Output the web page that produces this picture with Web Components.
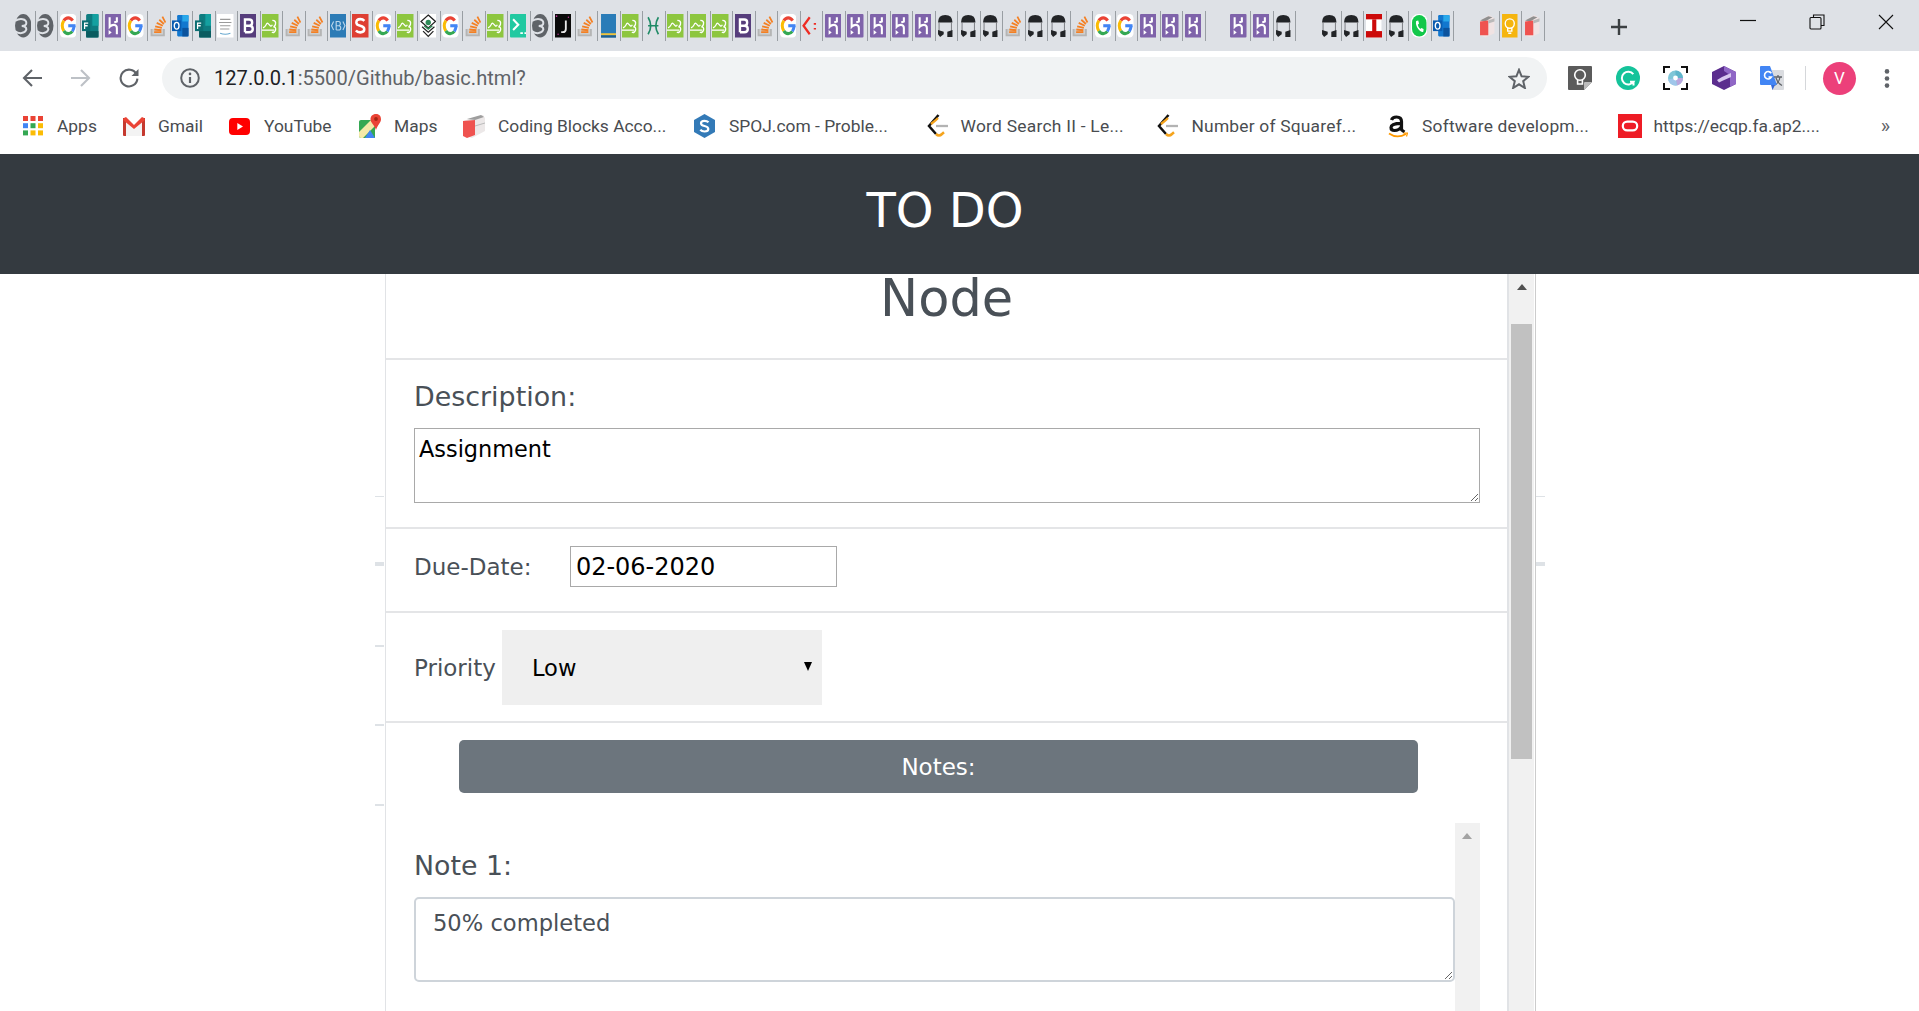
<!DOCTYPE html>
<html lang="en"><head><meta charset="utf-8"><title>TO DO</title>
<style>html,body{margin:0;padding:0;height:1011px;overflow:hidden;background:#fff}</style>
</head><body>
<todo-page></todo-page>
<script>
const gArc=(cx,cy,rx,ry,sw)=>{const a=(t1,t2,c)=>{const r=Math.PI/180,x1=cx+rx*Math.cos(t1*r),y1=cy+ry*Math.sin(t1*r),x2=cx+rx*Math.cos(t2*r),y2=cy+ry*Math.sin(t2*r);return `<path d="M${x1.toFixed(2)} ${y1.toFixed(2)}A${rx} ${ry} 0 0 1 ${x2.toFixed(2)} ${y2.toFixed(2)}" stroke="${c}" stroke-width="${sw}" fill="none"/>`};return a(-140,-40,'#ea4335')+a(140,220,'#fbbc05')+a(45,140,'#34a853')+a(0,45,'#4285f4')+`<path d="M${cx} ${cy}H${cx+rx+sw/2}" stroke="#4285f4" stroke-width="${sw}"/>`};
const T={
gh:`<ellipse cx="8" cy="11" rx="8" ry="11" fill="#5f6368"/><path d="M0 6.5C5 3.5 11 4.5 11 8.5C11 10.5 9 11.2 6.5 11.2C9 11.2 11 12.5 11 14.5C9.5 18.5 4 19 0 16" stroke="#dee1e6" stroke-width="1.9" fill="none"/>`,
g:`<rect width="16" height="22" rx="4" fill="#fff"/>`+gArc(8,11,5.6,7.4,2.9),
pl:`<rect x="4" width="12" height="22" rx="1.5" fill="#0e7c80"/><rect x="10" width="6" height="11" fill="#14a0a0"/><rect x="4" y="16" width="12" height="6" fill="#0a5c60"/><rect y="6" width="8" height="10" fill="#0d6e72"/><path d="M2.5 14V8.5H6M2.5 11H5.5" stroke="#fff" stroke-width="1.2" fill="none"/>`,
hk:`<rect width="16" height="22" rx="1" fill="#7f63aa"/><path d="M4.5 3V12C7 9.5 11.5 9.5 11.5 13V19" stroke="#fff" stroke-width="2" fill="none"/><path d="M11.5 3V7L9 8" stroke="#fff" stroke-width="2" fill="none"/><path d="M3.5 15L6.5 17.3L3.5 19.5Z" fill="#fff"/>`,
so:`<path d="M1.5 14V20H13.5V14" stroke="#b5b5b5" stroke-width="1.8" fill="#cfcfcf"/><path d="M4 17H11M4.2 14.5L11 15.2M5 11.5L11.5 13M6.5 8.3L12.4 11M9 5.4L13.5 9.4M12 2.5L15 8" stroke="#f48024" stroke-width="1.7" fill="none"/>`,
ol:`<rect x="5" y="1" width="11" height="20" rx="1" fill="#1277cf"/><rect x="10" y="1" width="6" height="6" fill="#29a8ea"/><rect x="10" y="13" width="6" height="8" fill="#0b539e"/><rect y="6" width="9" height="10" fill="#0a5cb0"/><ellipse cx="4.5" cy="11" rx="2.3" ry="3.2" stroke="#fff" stroke-width="1.3" fill="none"/>`,
wef:`<rect width="16" height="22" fill="#fff"/><path d="M3 5H13M2 8H14M3 11H13M3 14H12" stroke="#9a9a9a" stroke-width="1"/><path d="M3 18Q8 20 13 18" stroke="#69a9d0" stroke-width="1" fill="none"/>`,
bs:`<rect width="16" height="22" fill="#563d7c"/><path d="M4.8 17V5.2H9Q11.8 5.2 11.8 8Q11.8 11 9 11H4.8M9 11Q12.4 11 12.4 14Q12.4 17 9 17H4.8" stroke="#fff" stroke-width="2.3" fill="none"/>`,
gr:`<rect width="16" height="22" fill="#8dc63f"/><path d="M1 13Q3 12 4 10T6 9T8 11T10 10M0 15H12" stroke="#fff" stroke-width="1.2" fill="none"/><path d="M10 6Q14 6 13 10Q12 12 11 12Q14 12 13 15.5Q12 18 9.5 17" stroke="#fff" stroke-width="1.3" fill="none"/>`,
xb:`<rect width="16" height="22" fill="#2c7bb6"/><path d="M3.5 7L1.5 11L3.5 15M12.5 7L14.5 11L12.5 15" stroke="#b9d6ec" stroke-width="1.1" fill="none"/><path d="M6 15V7H8.5Q10 7 10 9T8.5 11H6M8.5 11Q10.4 11 10.4 13T8.5 15H6" stroke="#b9d6ec" stroke-width="1.1" fill="none"/>`,
rs:`<rect width="16" height="22" fill="#de3f33"/><path d="M12 6.5Q10.5 4.8 8 4.8Q4.2 4.8 4.2 8Q4.2 10.3 8 11Q11.9 11.8 11.9 14.3Q11.9 17.2 8 17.2Q5.2 17.2 3.8 15.4" stroke="#fff" stroke-width="2.4" fill="none"/>`,
hx:`<rect width="16" height="22" fill="#fff"/><path d="M8 1L15 7L8 13L1 7Z" stroke="#222" stroke-width="1.2" fill="none"/><path d="M2 12L8 17L14 12M3 16L8 21L13 16" stroke="#222" stroke-width="1.2" fill="none"/><circle cx="8" cy="8" r="2.6" fill="#2e8b57"/><path d="M4 11L8 14L12 11" stroke="#2e8b57" stroke-width="1.4" fill="none"/>`,
tm:`<rect width="16" height="22" rx="1" fill="#21c9a1"/><path d="M3 5L8 10L3 15" stroke="#fff" stroke-width="2" fill="none"/><path d="M10 18H12.5M14 18H16" stroke="#fff" stroke-width="1.6"/>`,
j:`<rect width="16" height="22" fill="#0a0a0a"/><path d="M10.5 6V14Q10.5 17 7.5 17H6" stroke="#e8e8e8" stroke-width="1.8" fill="none"/><circle cx="1.5" cy="2" r=".8" fill="#c2379a"/><circle cx="13" cy="3" r=".7" fill="#c2379a"/><circle cx="3" cy="19" r=".7" fill="#c2379a"/>`,
lb:`<rect x="1" width="15" height="22" fill="#2a7cb8"/><rect x="1" y="18" width="15" height="2" fill="#f0c33c"/><rect x="1" y="20" width="15" height="2" fill="#1f5f8f"/>`,
xg:`<path d="M3 3Q8 11 3 19M13 3Q8 11 13 19M3 11H13" stroke="#1f8a66" stroke-width="1.6" fill="none"/>`,
cd:`<path d="M7.5 3L1.5 11L7.5 19" stroke="#ee2c24" stroke-width="2.2" fill="none"/><path d="M12.5 8.5V10M12.5 13V14.5" stroke="#ee2c24" stroke-width="2.2"/>`,
mk:`<path d="M1 8Q1 1 8 1T15 8Z" fill="#222427"/><path d="M2 8V16M14 8V16" stroke="#6a6c70" stroke-width=".8"/><path d="M1 15L6.5 16.5V19L3 21.5L1 19ZM15 15L10 16.5V21.5H15Z" fill="#222427"/>`,
ri:`<rect x="0" y="1" width="15" height="21" fill="#fff"/><rect y="0" width="16" height="5" fill="#cc0a0a"/><rect x="6" y="5" width="4" height="12" fill="#cc0a0a"/><rect y="16" width="16" height="6" fill="#cc0a0a"/>`,
wa:`<rect width="16" height="22" rx="7" fill="#fff"/><rect x="1" y="1" width="14" height="20" rx="7" fill="#12c74a"/><path d="M5 6.5Q4 10 7 14T12 16.3L12.2 14L10 13L9 14Q7 12.5 6.6 10L7.8 9L7 6Z" fill="#fff"/>`,
bx:`<path d="M1 6L10 1L15 4V18L6 22L1 20Z" fill="#f0e3e3"/><path d="M1 6L9 2L13 3L6 7Z" fill="#8f8f8f"/><path d="M1 7L9 6V20L1 20Z" fill="#ef5350"/><path d="M9 9L15 7V4L9 6Z" fill="#b9b9b9"/>`,
kp:`<rect x="1" width="15" height="22" fill="#f5b50f"/><circle cx="8.5" cy="9" r="4.4" stroke="#fff" stroke-width="1.3" fill="none"/><path d="M6.5 13V16H10.5V13M7 18H10" stroke="#fff" stroke-width="1.3" fill="none"/>`
};
const I={
bulb:[24,24,`<path d="M1 0H23Q24 0 24 1V16L16 24H1Q0 24 0 23V1Q0 0 1 0Z" fill="#5b5b5b"/><path d="M24 16H17Q16 16 16 17V24Z" fill="#bdbdbd"/><circle cx="12" cy="9" r="5.3" stroke="#fff" stroke-width="1.6" fill="none"/><path d="M9.6 14V18H14.4V14" stroke="#fff" stroke-width="1.6" fill="none"/>`],
gram:[24,24,`<circle cx="12" cy="12" r="12" fill="#15c39a"/><path d="M17.3 8.2A6.4 6.4 0 1 0 17.5 15.8H14M17.5 15.8V19.5" stroke="#fff" stroke-width="2" fill="none"/>`],
lens:[25,24,`<path d="M1 7V1H7M18 1H24V7M24 17V23H18M7 23H1V17" stroke="#111" stroke-width="2" fill="none"/><circle cx="12.5" cy="12" r="7.5" fill="#7fc6d8"/><path d="M12.5 4.5A7.5 7.5 0 0 1 20 12L12.5 12Z" fill="#5fb5cb"/><path d="M12.5 12L20 12A7.5 7.5 0 0 1 14 19.4Z" fill="#b9a7dd"/><path d="M12.5 12L14 19.4A7.5 7.5 0 0 1 5.2 13.5Z" fill="#9fc6ea"/><circle cx="12.5" cy="12" r="2.4" fill="#fff"/>`],
hex:[24,24,`<path d="M12 0L24 6V18L12 24L0 18V6Z" fill="#5b2d8e"/><path d="M12 0L24 6V18L18 21V9L12 5Z" fill="#9067c6"/><path d="M5 14L10 11L19 7V11L10 15L7 16.5Z" fill="#d9c8f0"/>`],
tr:[24,24,`<path d="M12 4H23Q24 4 24 5V23Q24 24 23 24H12Z" fill="#dadce0"/><path d="M14 11H22M18 9V11M20 11Q19 17 14.5 19.5M16 12Q17.5 17 22 19.5" stroke="#5f6368" stroke-width="1.3" fill="none"/><path d="M1 0H10L17 19H1Q0 19 0 18V1Q0 0 1 0Z" fill="#4285f4"/><path d="M11 19L12.5 24L15 19Z" fill="#3367d6"/><path d="M11.3 7.2A3.7 3.7 0 1 0 11.5 11H8.5" stroke="#fff" stroke-width="1.6" fill="none"/>`],
star:[22,21,`<path d="M11 1.8L13.6 8.3L20.5 8.8L15.2 13.2L16.9 20L11 16.3L5.1 20L6.8 13.2L1.5 8.8L8.4 8.3Z" stroke="#5f6368" stroke-width="2" fill="none"/>`],
back:[20,18,`<path d="M20 9H2M10 1L2 9L10 17" stroke="#5f6368" stroke-width="2.1" fill="none"/>`],
fwd:[20,18,`<path d="M0 9H18M10 1L18 9L10 17" stroke="#bdc1c6" stroke-width="2.1" fill="none"/>`],
rel:[20,20,`<path d="M17.5 6.2A8.4 8.4 0 1 0 18.4 10.6" stroke="#5f6368" stroke-width="2.1" fill="none"/><path d="M19.5 1V8H12.5Z" fill="#5f6368"/>`],
info:[20,20,`<circle cx="10" cy="10" r="8.8" stroke="#5f6368" stroke-width="2" fill="none"/><path d="M10 9V15" stroke="#5f6368" stroke-width="2.2"/><circle cx="10" cy="5.9" r="1.3" fill="#5f6368"/>`],
dots:[6,19,`<circle cx="3" cy="2.4" r="2.3" fill="#5f6368"/><circle cx="3" cy="9.5" r="2.3" fill="#5f6368"/><circle cx="3" cy="16.6" r="2.3" fill="#5f6368"/>`],
apps:[20,20,[['#ea4335','#ea4335','#ea4335'],['#4285f4','#34a853','#fbbc05'],['#34a853','#fbbc05','#fbbc05']].map((r,y)=>r.map((c,x)=>`<rect x="${x*7.5}" y="${y*7.2}" width="5" height="5" fill="${c}"/>`).join('')).join('')],
gm:[22,20,`<path d="M3 5.5L11 13L19 5.5V20H3Z" fill="#f3f3f3"/><path d="M0 2L3 2V20H1Q0 20 0 19Z" fill="#c5392f"/><path d="M19 2H22V19Q22 20 21 20H19Z" fill="#c5392f"/><path d="M1 2L3 1L11 9L19 1L21 2L22 4L11 13L0 4Z" fill="#ea4335"/>`],
yt:[21,17,`<rect width="21" height="17" rx="4" fill="#f00"/><path d="M8.3 5L14 8.5L8.3 12Z" fill="#fff"/>`],
mp:[22,24,`<path d="M2 6H16V24H2Q0 24 0 22V8Q0 6 2 6Z" fill="#34a853"/><path d="M0 18L12 6H16V12L4 24H2Q0 24 0 22Z" fill="#f4e9a8"/><path d="M6 24L11 16L16 24Z" fill="#4285f4"/><path d="M0 8L3 6H9L2 13L0 11Z" fill="#34a853"/><path d="M17 0C13.5 0 11.5 2.5 11.5 5.2C11.5 8.5 15.5 11 17 16C18.5 11 22 8.5 22 5.2C22 2.5 20.5 0 17 0Z" fill="#ea4335"/><circle cx="17" cy="5" r="1.9" fill="#a52714"/>`],
cb:[22,24,`<path d="M0 7L9 4L20 1L22 4V17L9 24L0 21Z" fill="#ece8e8"/><path d="M0 7L12 6V21L4 24L0 22Z" fill="#ef5350"/><path d="M4 5L18 1L21 3L12 6Z" fill="#9e9e9e"/><path d="M12 12L22 9" stroke="#bbb"/>`],
sp:[21,24,`<path d="M10.5 0L21 6V18L10.5 24L0 18V6Z" fill="#337ab7"/><path d="M14.5 8.3Q13 6.8 10.5 6.8Q7 6.8 7 9.3Q7 11.3 10.5 12Q14.3 12.8 14.3 15Q14.3 17.5 10.5 17.5Q7.8 17.5 6.3 15.8" stroke="#fff" stroke-width="2.2" fill="none"/>`],
lc:[21,24,`<path d="M11.5 1L2 12L9 20" stroke="#111" stroke-width="2.5" fill="none"/><path d="M9 20Q12 23 15 20L17 18.3" stroke="#f5a41d" stroke-width="2.5" fill="none"/><path d="M4 10L8.5 6.5L11 4" stroke="#f5a41d" stroke-width="2.3" fill="none"/><path d="M9 12H21" stroke="#b3b3b3" stroke-width="2.3"/>`],
az:[20,24,`<path d="M13.5 16.5V7.5Q13.5 3 8.5 3Q4.5 3 3.5 6M13.5 9.3Q3 9.3 3 13.5Q3 16.5 6.5 16.5Q11 16.5 13.5 12.5" stroke="#111" stroke-width="3.2" fill="none"/><path d="M13 15.5L16.5 18" stroke="#111" stroke-width="2.8"/><path d="M1 19.5Q9 25 18 20" stroke="#f90" stroke-width="1.8" fill="none"/><path d="M15.5 19.2H19.5L18.5 22.5" stroke="#f90" stroke-width="1.2" fill="none"/>`],
or:[24,24,`<rect width="24" height="24" fill="#ee1c25"/><rect x="4.8" y="7.6" width="14.4" height="8.8" rx="4.4" stroke="#fff" stroke-width="2.2" fill="none"/>`]
};
function shadow(el,html){const r=el.attachShadow({mode:'open'});r.innerHTML=html;return r}
customElements.define('tab-fav',class extends HTMLElement{connectedCallback(){
 const n=this.getAttribute('n');
 shadow(this,`<style>:host{display:flex;box-sizing:border-box;width:22.5px;height:30px;padding-right:2.7px;align-items:center;justify-content:center;border-right:1.4px solid #999ea3}svg{display:block;flex:none;width:16.5px;height:23.5px}</style><svg viewBox="0 0 16 22" preserveAspectRatio="none">${T[n]}</svg>`)}});
customElements.define('ui-icon',class extends HTMLElement{connectedCallback(){
 const [w,h,b]=I[this.getAttribute('n')];const W=this.getAttribute('w')||w,H=this.getAttribute('h')||h;
 shadow(this,`<style>:host{display:block;flex:none;width:${W}px;height:${H}px}svg{display:block;width:100%;height:100%}</style><svg viewBox="0 0 ${w} ${h}">${b}</svg>`)}});
customElements.define('tab-strip',class extends HTMLElement{connectedCallback(){
 const groups=[['gh','gh','g','pl','hk','g','so','ol','pl','wef','bs','gr','so','so','xb','rs','g','gr','hx','g','so','gr','tm','gh','j','so','lb','gr','xg','gr','gr','gr','bs','so','g','cd','hk','hk','hk','hk','hk','mk','mk','mk','so','mk','mk','so','g','g','hk','hk','hk'],['hk','hk','mk'],['mk','mk','ri','mk','wa','ol'],['bx','kp','bx']];
 shadow(this,`<style>:host{display:flex;height:51px;background:#dee1e6;align-items:flex-start;padding:11px 25px 0 13.4px;box-sizing:border-box}
 .g{display:flex;margin-right:23px}.g:last-of-type{margin-right:0}
 .plus{margin:7px 0 0 42px;width:18px;height:18px}.win{margin-left:auto;display:flex;gap:53px;padding-top:3px}svg{display:block}</style>
 ${groups.map(g=>`<div class="g">${g.map(n=>`<tab-fav n="${n}"></tab-fav>`).join('')}</div>`).join('')}
 <svg class="plus" viewBox="0 0 18 18"><path d="M9 1V17M1 9H17" stroke="#3c4043" stroke-width="2.4"/></svg>
 <div class="win"><svg width="16" height="16" viewBox="0 0 16 16"><path d="M0 6.5H16" stroke="#111" stroke-width="1.2"/></svg>
 <svg width="16" height="16" viewBox="0 0 16 16"><path d="M4.5 3V1H15V11.5H12" stroke="#111" stroke-width="1.1" fill="none"/><rect x="1" y="3.5" width="11" height="11.5" rx="1" stroke="#111" stroke-width="1.1" fill="none"/></svg>
 <svg width="16" height="16" viewBox="0 0 16 16"><path d="M1 1L15 15M15 1L1 15" stroke="#111" stroke-width="1.1"/></svg></div>`)}});
customElements.define('tool-bar',class extends HTMLElement{connectedCallback(){
 shadow(this,`<style>:host{display:flex;height:50px;background:#fff;box-sizing:border-box;padding:6px 0 2px 22px;align-items:center;font:20.1px Roboto,sans-serif}
 .omni{margin-left:23px;width:1385px;height:42px;border-radius:21px;background:#f1f3f4;display:flex;align-items:center;padding:0 17px 0 18px;box-sizing:border-box}
 .url{margin-left:14px;color:#5f6368;flex:1}.url b{font-weight:400;color:#202124}
 .ext{display:flex;align-items:center;margin-left:21px}.sep{width:1px;height:24px;background:#d5d7da;margin:0 17px 0 21px}
 .av{width:33px;height:33px;border-radius:50%;background:#ec407a;color:#fff;display:flex;align-items:center;justify-content:center;font:17px Roboto,sans-serif;margin-right:28px}</style>
 <ui-icon n="back"></ui-icon><ui-icon n="fwd" style="margin-left:29px"></ui-icon><ui-icon n="rel" style="margin-left:28px"></ui-icon>
 <div class="omni"><ui-icon n="info"></ui-icon><span class="url"><b>127.0.0.1</b>:5500/Github/basic.html?</span><ui-icon n="star"></ui-icon></div>
 <div class="ext"><ui-icon n="bulb"></ui-icon><ui-icon n="gram" style="margin-left:24px"></ui-icon><ui-icon n="lens" style="margin-left:23px"></ui-icon><ui-icon n="hex" style="margin-left:24px"></ui-icon><ui-icon n="tr" style="margin-left:24px"></ui-icon><span class="sep"></span><span class="av">V</span><ui-icon n="dots"></ui-icon></div>`)}});
customElements.define('book-mark',class extends HTMLElement{connectedCallback(){
 shadow(this,`<style>:host{display:flex;align-items:center;flex:none;width:${this.getAttribute('w')}px;gap:${this.getAttribute('g')||13}px;color:#494c50;white-space:nowrap}</style><ui-icon n="${this.getAttribute('n')}" w="${this.getAttribute('iw')||21}" h="${this.getAttribute('ih')||24}"></ui-icon><slot></slot>`)}});
customElements.define('book-marks',class extends HTMLElement{connectedCallback(){
 shadow(this,`<style>:host{display:flex;height:53px;background:#fff;align-items:center;box-sizing:border-box;padding:0 0 3px 23px;font:17.4px Roboto,sans-serif;position:relative}.more{margin-left:auto;margin-right:29px;color:#5f6368;font-size:20px}</style><slot></slot><span class="more">»</span>`)}});
customElements.define('browser-chrome',class extends HTMLElement{connectedCallback(){
 shadow(this,`<style>:host{display:block}</style><tab-strip></tab-strip><tool-bar></tool-bar>
 <book-marks>
 <book-mark n="apps" w="100" iw="20" ih="20" g="14">Apps</book-mark><book-mark n="gm" w="106" ih="20" iw="22">Gmail</book-mark><book-mark n="yt" w="130" ih="17" g="14">YouTube</book-mark><book-mark n="mp" w="104" iw="22">Maps</book-mark><book-mark n="cb" w="231" iw="22">Coding Blocks Acco...</book-mark><book-mark n="sp" w="232.5" g="14">SPOJ.com - Proble...</book-mark><book-mark n="lc" w="230.5" style="letter-spacing:.25px">Word Search II - Le...</book-mark><book-mark n="lc" w="231" g="13.5" style="letter-spacing:.2px">Number of Squaref...</book-mark><book-mark n="az" w="229.5" iw="20" g="14" style="letter-spacing:.2px">Software developm...</book-mark><book-mark n="or" w="240" iw="24" g="12">https://ecqp.fa.ap2....</book-mark>
 </book-marks>`)}});
customElements.define('app-header',class extends HTMLElement{connectedCallback(){
 shadow(this,`<style>:host{display:block;height:120px;background:#343a40;color:#fff;text-align:center;padding-right:29px;box-sizing:border-box}h1{margin:0;font:400 48px/113px "DejaVu Sans",sans-serif}</style><h1><slot></slot></h1>`)}});
customElements.define('scroll-bar',class extends HTMLElement{connectedCallback(){
 const th=this.getAttribute('thumb');
 shadow(this,`<style>:host{display:block;flex:none;width:25px;background:#f1f1f1;position:relative}
 .a{width:0;height:0;margin:${this.getAttribute('at')||10}px auto 0;border:5.5px solid transparent;border-top:0;border-bottom:6px solid ${this.getAttribute('c')||'#505050'}}
 .t{margin:${th?'34px':'0'} 2px 0 2px;height:${th||0}px;background:#c1c1c1}</style><div class="a"></div><div class="t"></div>`)}});
customElements.define('modal-row',class extends HTMLElement{connectedCallback(){
 shadow(this,`<style>:host{display:block;box-sizing:border-box;border-bottom:2px solid #e4e5e7;padding:0 28.2px}</style><slot></slot>`)}});
customElements.define('field-box',class extends HTMLElement{connectedCallback(){
 shadow(this,`<style>:host{display:flex;align-items:center;box-sizing:border-box;font:24px "DejaVu Sans",sans-serif;color:#000;background:#fff;border:1.4px solid #a9a9a9;height:41px;width:267px;padding:1px 0 0 4.5px}</style><slot></slot>`)}});
customElements.define('select-box',class extends HTMLElement{connectedCallback(){
 shadow(this,`<style>:host{display:flex;align-items:center;justify-content:space-between;box-sizing:border-box;font:22.6px "DejaVu Sans",sans-serif;color:#000;background:#efefef;width:320px;height:75px;padding:0 10px 0 29.5px}
 i{display:block;border:4.5px solid transparent;border-bottom:0;border-top:9px solid #000;margin-top:-2px}</style><slot></slot><i></i>`)}});
customElements.define('note-item',class extends HTMLElement{connectedCallback(){
 shadow(this,`<style>:host{display:block;flex:1;min-width:0;padding-top:28px}
 h4{margin:0 0 16px;font:400 26.8px/30px "DejaVu Sans",sans-serif;color:#495057}
 textarea{display:block;box-sizing:border-box;width:100%;height:85px;border:2px solid #ced4da;border-radius:5px;font:22.6px/33px "DejaVu Sans",sans-serif;color:#495057;padding:8px 17px 4px;margin:0;outline:0;background:#fff}</style>
 <h4>${this.getAttribute('label')}</h4><textarea>${this.getAttribute('value')}</textarea>`)}});
customElements.define('node-modal',class extends HTMLElement{connectedCallback(){
 const lab='font:400 23px "DejaVu Sans",sans-serif;color:#495057';
 shadow(this,`<style>:host{display:flex;position:relative;z-index:1;box-sizing:border-box;margin-left:384.8px;width:1151.2px;height:737px;background:#fff;border-left:1.6px solid #e1e3e6;border-right:1px solid #ccc}
 .body{flex:none;width:1121.6px;border-right:2px solid #e1e3e6}
 h2{margin:0;font:400 51px/49px "DejaVu Sans",sans-serif;color:#495057;text-align:center;height:84px}
 .d{height:169px;padding-top:22px}.d h4{margin:0 0 16px;font:400 26.9px/30px "DejaVu Sans",sans-serif;color:#495057}
 textarea.big{display:block;box-sizing:border-box;width:1066px;height:75px;border:1.4px solid #a9a9a9;border-radius:0;font:22.4px/33px "DejaVu Sans",sans-serif;color:#000;padding:4px 4px;margin:0;outline:0}
 .f{display:flex;align-items:center}
 .due{height:84px;padding-top:17px}.due span{${lab};width:156.4px}
 .pri{height:110px;padding-top:17px}.pri span{${lab};width:88.4px}
 .nt{display:flex;flex-direction:column}
 .btn{width:959px;height:53px;margin:17px 0 30px 45px;border-radius:5px;background:#6c757d;color:#fff;font:23px/54px "DejaVu Sans",sans-serif;text-align:center;flex:none}
 .notes{display:flex;width:1066px;height:188px;margin:0}</style>
 <div class="body">
 <modal-row><h2>Node</h2></modal-row>
 <modal-row class="d"><h4>Description:</h4><textarea class="big">Assignment</textarea></modal-row>
 <modal-row class="due"><div class="f"><span>Due-Date:</span><field-box>02-06-2020</field-box></div></modal-row>
 <modal-row class="pri"><div class="f"><span>Priority</span><select-box>Low</select-box></div></modal-row>
 <modal-row class="nt" style="border:0;height:288px"><div class="btn">Notes:</div><div class="notes"><note-item label="Note 1:" value="50% completed"></note-item><scroll-bar c="#a3a3a3" at="10"></scroll-bar></div></modal-row>
 </div>
 <scroll-bar thumb="435" at="10"></scroll-bar>`)}});
customElements.define('backdrop-ticks',class extends HTMLElement{connectedCallback(){
 const L=[[222,1],[288,4],[371,2],[450,2],[530,2]],R=[[222,1],[288,4]];
 const b=(a,x)=>a.map(([y,h])=>`<i style="left:${x}px;top:${y}px;height:${h}px"></i>`).join('');
 shadow(this,`<style>:host{position:absolute;inset:0;display:block}i{position:absolute;width:9px;background:#dee2e6}</style>${b(L,375)}${b(R,1536)}`)}});
customElements.define('todo-page',class extends HTMLElement{connectedCallback(){
 shadow(this,`<style>:host{display:block;width:1919px;height:1011px;overflow:hidden;background:#fff}main{position:relative;display:block;height:737px}</style>
 <browser-chrome></browser-chrome><app-header>TO DO</app-header><main><backdrop-ticks></backdrop-ticks><node-modal></node-modal></main>`)}});
</script>
</body></html>
